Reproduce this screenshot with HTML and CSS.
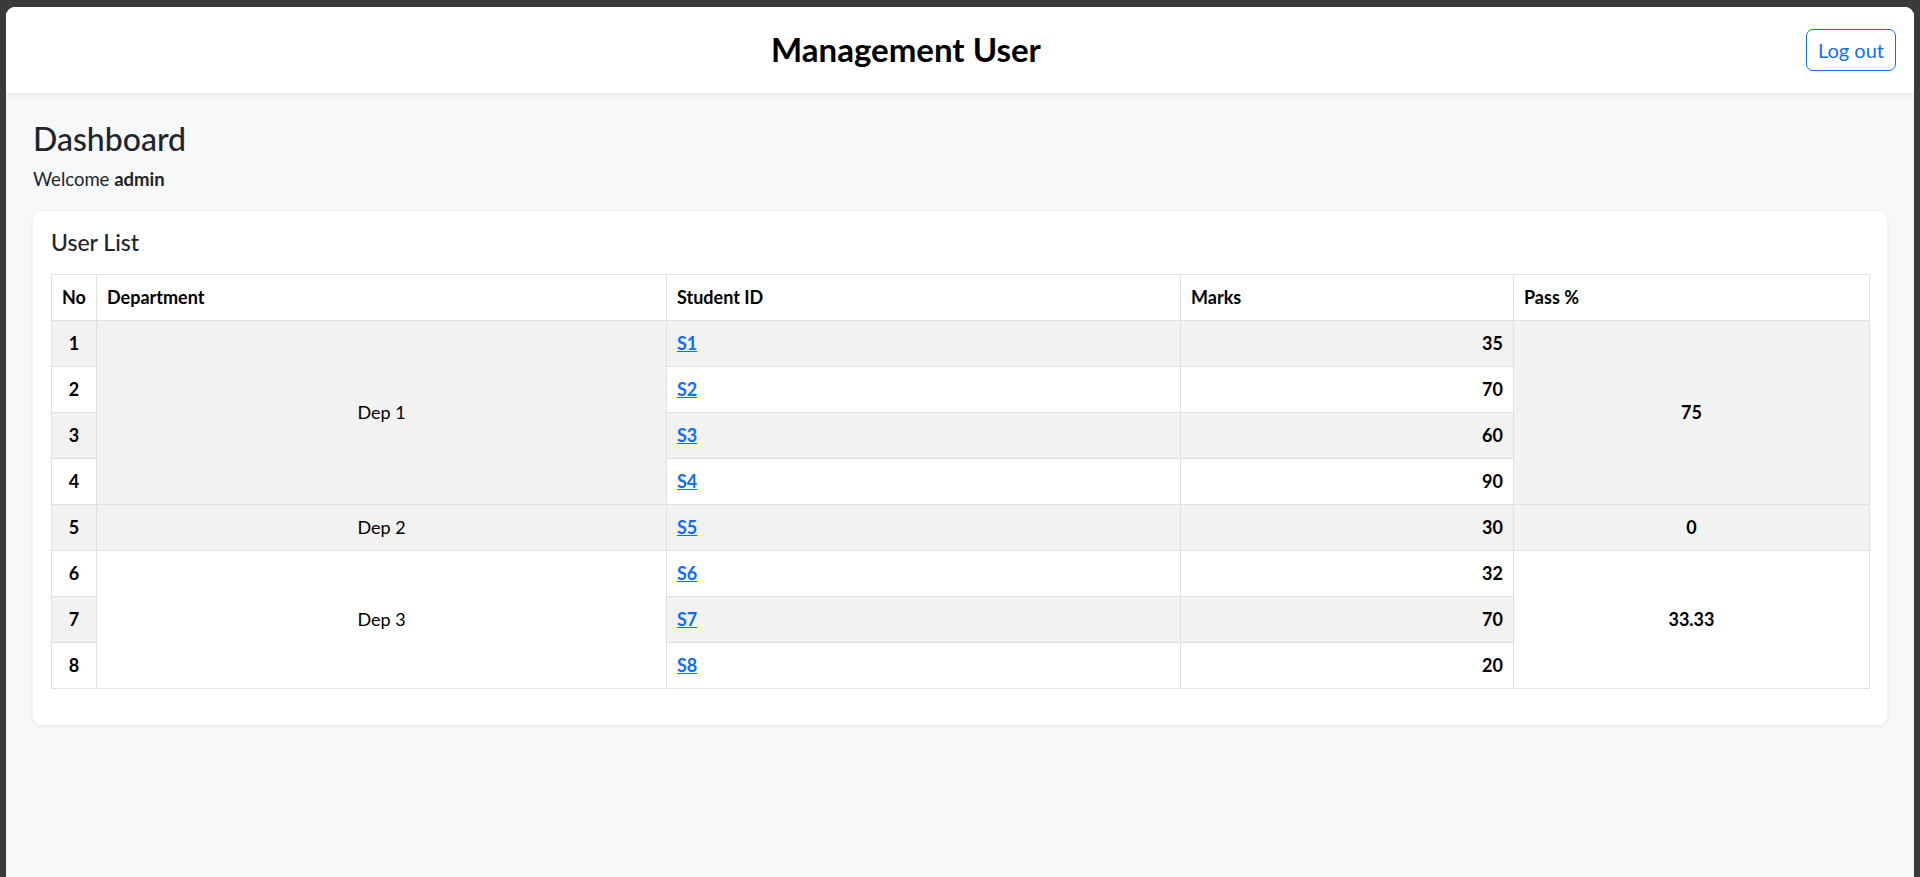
FILE: index.html
```html
<!DOCTYPE html>
<html lang="en">
<head>
<meta charset="utf-8">
<title>Management User</title>
<link rel="stylesheet" href="styles.css">
</head>
<body>
<div class="window">
  <header class="topbar">
    <h1 class="topbar-title">Management User</h1>
    <button class="btn-logout" type="button">Log out</button>
  </header>
  <main class="content">
    <h2 class="page-title">Dashboard</h2>
    <p class="welcome">Welcome <strong>admin</strong></p>
    <section class="card">
      <h3 class="card-title">User List</h3>
      <table class="users">
        <colgroup>
          <col class="c-no"><col class="c-dep"><col class="c-id"><col class="c-marks"><col class="c-pass">
        </colgroup>
        <thead>
          <tr><th>No</th><th>Department</th><th>Student ID</th><th>Marks</th><th>Pass %</th></tr>
        </thead>
        <tbody>
          <tr class="odd"><td class="no">1</td><td class="dep" rowspan="4">Dep 1</td><td><a href="#">S1</a></td><td class="marks">35</td><td class="pass" rowspan="4">75</td></tr>
          <tr><td class="no">2</td><td><a href="#">S2</a></td><td class="marks">70</td></tr>
          <tr class="odd"><td class="no">3</td><td><a href="#">S3</a></td><td class="marks">60</td></tr>
          <tr><td class="no">4</td><td><a href="#">S4</a></td><td class="marks">90</td></tr>
          <tr class="odd"><td class="no">5</td><td class="dep">Dep 2</td><td><a href="#">S5</a></td><td class="marks">30</td><td class="pass">0</td></tr>
          <tr><td class="no">6</td><td class="dep" rowspan="3">Dep 3</td><td><a href="#">S6</a></td><td class="marks">32</td><td class="pass" rowspan="3">33.33</td></tr>
          <tr class="odd"><td class="no">7</td><td><a href="#">S7</a></td><td class="marks">70</td></tr>
          <tr><td class="no">8</td><td><a href="#">S8</a></td><td class="marks">20</td></tr>
        </tbody>
      </table>
    </section>
  </main>
</div>
</body>
</html>
```
FILE: styles.css
```css
* { box-sizing: border-box; }
html, body { height: 100%; }
body {
  margin: 0;
  padding: 7px 6px 0 6px;
  background: #3a3a3a;
  font-family: Lato, "Noto Sans", sans-serif;
  color: #212529;
  overflow: hidden;
}
.window {
  height: 878px;
  background: #f7f8fa;
  border-radius: 9px;
  overflow: hidden;
}
.topbar {
  height: 86px;
  background: #fff;
  display: flex;
  align-items: center;
  padding: 0 18px;
  box-shadow: 0 2px 5px rgba(0,0,0,0.07);
  position: relative;
}
.topbar-title {
  flex: 1;
  margin: 0;
  text-align: center;
  font-size: 33px;
  font-weight: 700;
  color: #000;
  line-height: 1.2;
}
.btn-logout {
  margin-left: 18px;
  width: 90px;
  height: 42px;
  padding: 0;
  border: 1px solid #0d6efd;
  border-radius: 7px;
  background: #fff;
  color: #0d6efd;
  font-family: Lato, "Noto Sans", sans-serif;
  font-size: 20px;
  line-height: 30px;
}
.content {
  padding: 27px 27px 0 27px;
}
.page-title {
  margin: 0 0 8px 0;
  font-size: 32px;
  font-weight: 500;
  line-height: 1.2;
}
.welcome {
  margin: 0 0 19px 0;
  font-size: 18.5px;
  line-height: 26px;
}
.welcome strong { font-weight: 700; }
.card {
  background: #fff;
  border-radius: 8px;
  padding: 18px 18px 36px 18px;
  box-shadow: 0 1px 4px rgba(0,0,0,0.07);
}
.card-title {
  margin: 0 0 17px 0;
  font-size: 23px;
  font-weight: 500;
  line-height: 1.2;
}
.users {
  width: 1818px;
  table-layout: fixed;
  border-collapse: collapse;
  font-size: 18px;
  color: #000;
}
.c-no { width: 45px; }
.c-dep { width: 570px; }
.c-id { width: 514px; }
.c-marks { width: 333px; }
.c-pass { width: 356px; }
.users th, .users td {
  border: 1px solid #dee2e6;
  padding: 10px 10px;
  height: 46px;
  line-height: 25px;
  vertical-align: middle;
  background: #fff;
}
.users th { text-align: left; font-weight: 700; }
.users tr.odd td { background: #f2f2f2; }
.users td.no { text-align: center; font-weight: 700; }
.users td.dep { text-align: center; }
.users td.marks { text-align: right; font-weight: 700; }
.users td.pass { text-align: center; font-weight: 700; }
.users a { color: #0d6efd; font-weight: 700; text-decoration: underline; }
```
